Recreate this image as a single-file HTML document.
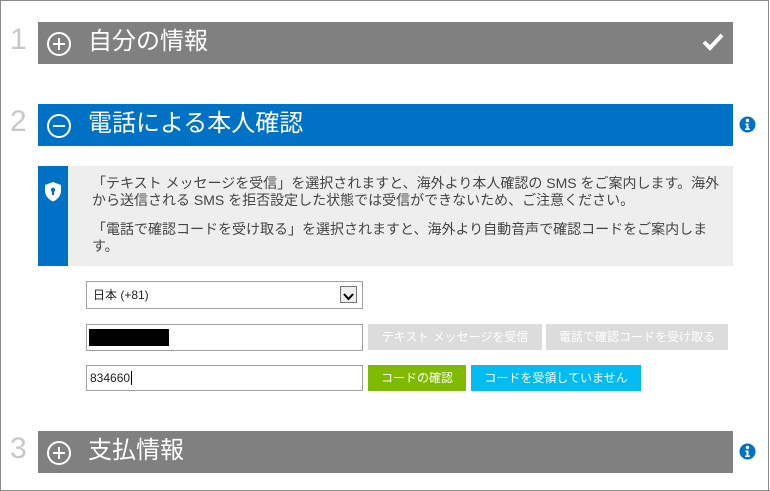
<!DOCTYPE html>
<html><head><meta charset="utf-8"><style>
*{margin:0;padding:0;box-sizing:border-box}
body{width:770px;height:491px;background:#fff;font-family:"Liberation Sans","Noto Sans CJK JP",sans-serif;position:relative;overflow:hidden}
.frame{position:absolute;left:0;top:0;width:769px;height:491px;border:1px solid #8a8a8a;border-bottom:none}
.abs{position:absolute}
.num{position:absolute;left:10px;font-size:30px;color:#c8c8c8;font-weight:300}
.bar{position:absolute;left:38px;width:695px;height:42px;color:#fff;font-size:24px}
.bar .t{position:absolute;left:50px;top:5px;line-height:30px}
.bar svg.c{position:absolute;left:8px;top:9px}
.info{position:absolute;left:739px}
.box{position:absolute;left:38px;top:166px;width:695px;height:100px;background:#eeeeee}
.box .strip{position:absolute;left:0;top:0;width:30px;height:100px;background:#0072c6}
.box p{position:absolute;left:54px;font-size:14px;line-height:17px;color:#444;width:632px}
.in{position:absolute;left:86px;width:277px;border:1px solid #a0a0a0;background:#fff;font-size:12px;color:#222}
.btn{position:absolute;color:#fff;font-size:12px;text-align:center;line-height:26px}
</style></head><body>
<div class="frame"></div>
<div class="num" style="top:23px">1</div>
<div class="bar" style="top:22px;background:#808080">
<svg class="c" width="26" height="26"><circle cx="13" cy="13" r="11" fill="none" stroke="#fff" stroke-width="2"/><path d="M7 13h12M13 7v12" stroke="#fff" stroke-width="2"/></svg>
<div class="t">自分の情報</div>
<svg class="abs" style="left:664px;top:10px" width="22" height="20"><path d="M2 10l6 6L20 3" fill="none" stroke="#fff" stroke-width="4"/></svg>
</div>
<div class="num" style="top:105px">2</div>
<div class="bar" style="top:104px;background:#0072c6">
<svg class="c" width="26" height="26"><circle cx="13" cy="13" r="11" fill="none" stroke="#fff" stroke-width="2"/><path d="M7 13h12" stroke="#fff" stroke-width="2"/></svg>
<div class="t">電話による本人確認</div>
</div>
<svg class="info" style="top:116px" width="17" height="17"><circle cx="8.5" cy="8.5" r="8" fill="#0072c6"/><circle cx="8.5" cy="4.5" r="1.7" fill="#fff"/><path d="M6.5 7.5h3v5h1.5v1.5h-5v-1.5h1.5v-3.5h-1z" fill="#fff"/></svg>
<div class="box"><div class="strip">
<svg class="abs" style="left:5px;top:15px" width="20" height="22"><path d="M10 1L2 4v5.5c0 5.5 4 9.5 8 11 4-1.5 8-5.5 8-11V4z" fill="#fff"/><circle cx="10" cy="9" r="2.2" fill="#0072c6"/><rect x="9" y="9" width="2" height="5" fill="#0072c6"/></svg>
</div>
<p style="top:9px">「テキスト メッセージを受信」を選択されますと、海外より本人確認の SMS をご案内します。海外から送信される SMS を拒否設定した状態では受信ができないため、ご注意ください。</p>
<p style="top:55px">「電話で確認コードを受け取る」を選択されますと、海外より自動音声で確認コードをご案内します。</p>
</div>
<div class="in" style="top:281px;height:28px;line-height:26px;padding-left:6px">日本 (+81)
<div class="abs" style="right:5px;top:4px;width:17px;height:17px;border:1px solid #777;background:#eee"><svg width="15" height="15"><path d="M3 5l4.5 5L12 5" fill="none" stroke="#000" stroke-width="2"/></svg></div></div>
<div class="in" style="top:324px;height:27px"><div class="abs" style="left:2px;top:4px;width:80px;height:17px;background:#000"></div></div>
<div class="btn" style="left:368px;top:324px;width:174px;background:#dcdcdc">テキスト メッセージを受信</div>
<div class="btn" style="left:546px;top:324px;width:182px;background:#dcdcdc">電話で確認コードを受け取る</div>
<div class="in" style="top:365px;height:26px;line-height:24px;padding-left:3px">834660<span style="border-left:1px solid #000;margin-left:1px"></span></div>
<div class="btn" style="left:368px;top:365px;width:98px;background:#7fba00">コードの確認</div>
<div class="btn" style="left:471px;top:365px;width:170px;background:#00bcf2">コードを受領していません</div>
<div class="num" style="top:432px">3</div>
<div class="bar" style="top:431px;background:#808080">
<svg class="c" width="26" height="26"><circle cx="13" cy="13" r="11" fill="none" stroke="#fff" stroke-width="2"/><path d="M7 13h12M13 7v12" stroke="#fff" stroke-width="2"/></svg>
<div class="t">支払情報</div>
</div>
<svg class="info" style="top:443px" width="17" height="17"><circle cx="8.5" cy="8.5" r="8" fill="#0072c6"/><circle cx="8.5" cy="4.5" r="1.7" fill="#fff"/><path d="M6.5 7.5h3v5h1.5v1.5h-5v-1.5h1.5v-3.5h-1z" fill="#fff"/></svg>
<div class="abs" style="left:0;top:490px;width:770px;height:1px;background:#8a8a8a"></div>
</body></html>
